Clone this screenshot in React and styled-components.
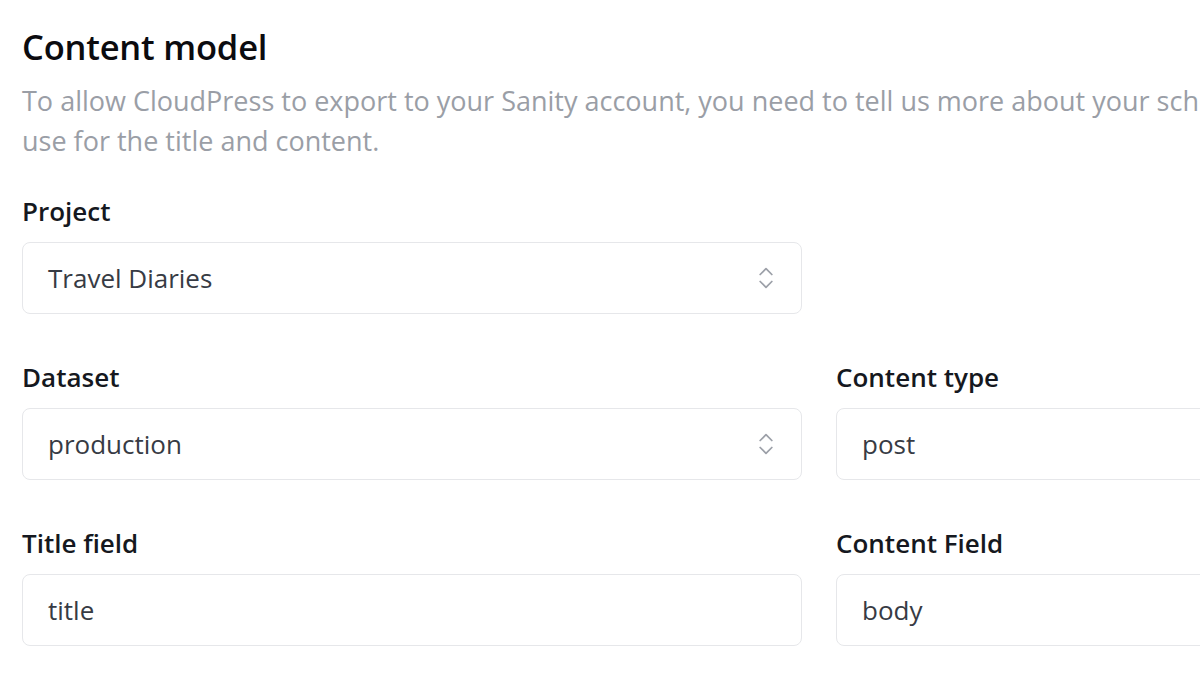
import React from 'react'
import styled, { createGlobalStyle } from 'styled-components'
import { ChevronsUpDown } from 'lucide-react'

const GlobalStyle = createGlobalStyle`
 html, body {
  margin: 0;
  padding: 0;
  background: #fff;
  overflow: hidden;
 }
 body {
  font-family: "Open Sans", "Noto Sans", sans-serif;
  color: #111827;
 }
`

const Page = styled.div`
 width: 1800px;
 padding: 23px 22px 0;
`

const Title = styled.h2`
 margin: 0;
 font-size: 34.5px;
 font-weight: 600;
 line-height: 48px;
 color: #0b0b0f;
 letter-spacing: -0.2px;
`

const Lead = styled.p`
 margin: 10px 0 0;
 font-size: 27px;
 line-height: 40px;
 color: #9a9ea6;
 white-space: nowrap;
`

const Grid = styled.div`
 display: grid;
 grid-template-columns: 780px 780px;
 column-gap: 34px;
 row-gap: 46px;
 margin-top: 33px;
`

const Field = styled.div`
 display: flex;
 flex-direction: column;
 gap: 14px;
`

const Label = styled.label`
 font-size: 26px;
 font-weight: 600;
 line-height: 34px;
 color: #151820;
`

const Box = styled.div`
 display: flex;
 align-items: center;
 justify-content: space-between;
 height: 72px;
 box-sizing: border-box;
 padding: 0 21px 0 25px;
 border: 1.5px solid #e6e7ea;
 border-radius: 8px;
 font-size: 26px;
 color: #373b44;
 background: #fff;
`

const Icon = styled(ChevronsUpDown)`
 color: #9ca0a8;
 flex-shrink: 0;
`

function Input({ value, select }) {
 return (
  <Box>
   <span>{value}</span>
   {select && <Icon size={28} strokeWidth={1.5} />}
  </Box>
 )
}

export default function App() {
 return (
  <Page>
   <GlobalStyle />
   <Title>Content model</Title>
   <Lead>
    To allow CloudPress to export to your Sanity account, you need to tell us more about your schema and which fields to
    <br />
    use for the title and content.
   </Lead>
   <Grid>
    <Field>
     <Label>Project</Label>
     <Input value="Travel Diaries" select />
    </Field>
    <div />
    <Field>
     <Label>Dataset</Label>
     <Input value="production" select />
    </Field>
    <Field>
     <Label>Content type</Label>
     <Input value="post" />
    </Field>
    <Field>
     <Label>Title field</Label>
     <Input value="title" />
    </Field>
    <Field>
     <Label>Content Field</Label>
     <Input value="body" />
    </Field>
   </Grid>
  </Page>
 )
}
